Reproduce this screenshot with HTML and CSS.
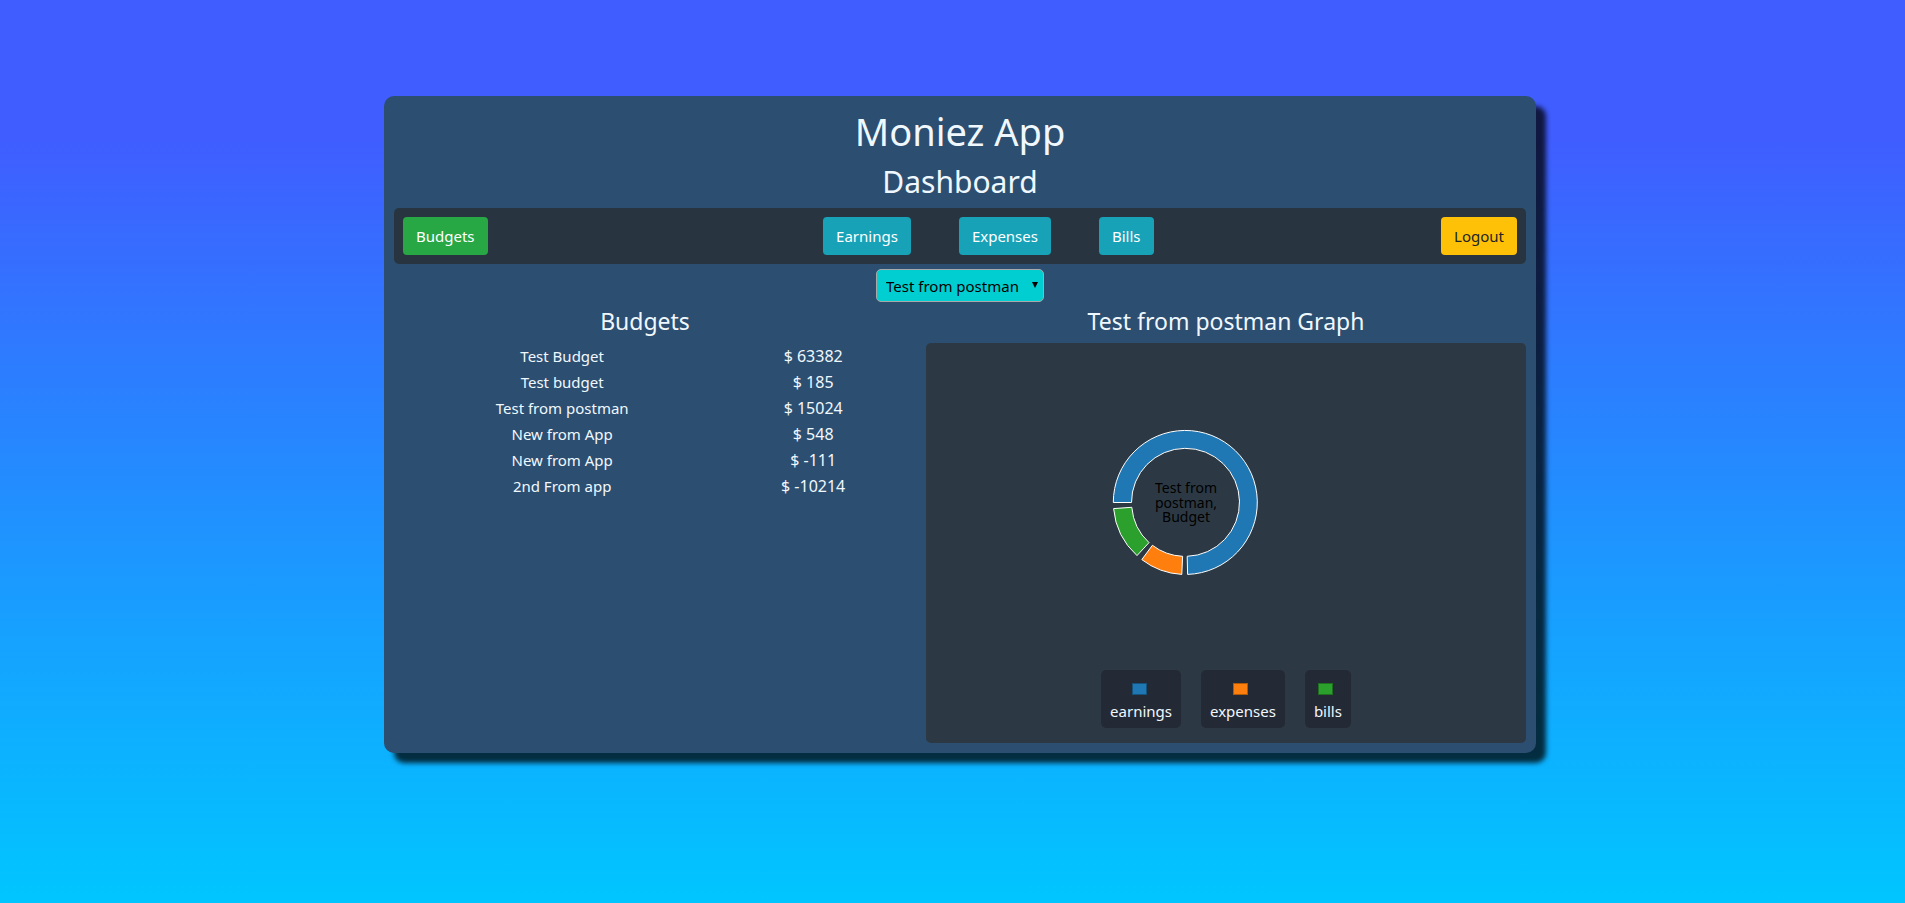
FILE: index.html
```html
<!DOCTYPE html>
<html lang="en">
<head>
<meta charset="utf-8">
<title>Moniez App</title>
<link rel="stylesheet" href="styles.css">
</head>
<body>
<main class="card">
  <h1>Moniez App</h1>
  <h2>Dashboard</h2>
  <nav class="bar">
    <a class="btn green" href="#budgets">Budgets</a>
    <div class="links">
      <a class="btn teal" href="#earnings">Earnings</a>
      <a class="btn teal" href="#expenses">Expenses</a>
      <a class="btn teal" href="#bills">Bills</a>
    </div>
    <button class="btn yellow" type="button">Logout</button>
  </nav>
  <div class="picker">
    <select aria-label="Budget">
      <option>Test from postman</option>
      <option>Test Budget</option>
      <option>New from App</option>
    </select>
    <svg class="arrow" viewBox="0 0 6 6" aria-hidden="true"><path d="M0 0H6L3 6Z"/></svg>
  </div>
  <div class="columns">
    <section id="budgets">
      <h3>Budgets</h3>
      <table>
        <tr><td class="name">Test Budget</td><td>$ 63382</td></tr>
        <tr><td class="name">Test budget</td><td>$ 185</td></tr>
        <tr><td class="name">Test from postman</td><td>$ 15024</td></tr>
        <tr><td class="name">New from App</td><td>$ 548</td></tr>
        <tr><td class="name">New from App</td><td>$ -111</td></tr>
        <tr><td class="name">2nd From app</td><td>$ -10214</td></tr>
      </table>
    </section>
    <section>
      <h3>Test from postman Graph</h3>
      <div class="graph">
        <svg class="donut" viewBox="0 0 600 320" role="img" aria-label="Test from postman, Budget">
          <g transform="translate(154 57)" stroke="#fff">
            <path fill="#1f77b4" d="M33.3 102.5A72 72 0 1 1 107.6 174.4L107.2 156.3A54 54 0 1 0 51.5 102.5Z"/>
            <path fill="#ff7f0e" d="M101.8 174.4A72 72 0 0 1 61.8 159.6L72.4 145.3A54 54 0 0 0 102.6 156.3Z"/>
            <path fill="#2ca02c" d="M57 155.6A72 72 0 0 1 33.6 108.6L51.8 107.3A54 54 0 0 0 69 142.6Z"/>
          </g>
          <g class="label">
            <text x="260" y="150">Test from</text>
            <text x="260" y="165">postman,</text>
            <text x="260" y="179">Budget</text>
          </g>
        </svg>
        <ul class="legend">
          <li><span class="swatch blue"></span>earnings</li>
          <li><span class="swatch orange"></span>expenses</li>
          <li><span class="swatch lime"></span>bills</li>
        </ul>
      </div>
    </section>
  </div>
</main>
</body>
</html>
```
FILE: styles.css
```css
* { box-sizing: border-box; }
body {
  margin: 0;
  min-height: 100vh;
  padding: 96px 0 96px 15px;
  background: linear-gradient(#405dff 15%, #00c6ff 100%);
  color: #f0f8ff;
  font: 15px/24px "Noto Sans", sans-serif;
}
.card {
  max-width: 1152px;
  margin: 0 auto;
  padding: 10px;
  border-radius: 10px;
  background: #2c4e70;
  box-shadow: 10px 10px 5px rgba(0, 0, 0, .75);
}
h1, h2, h3 { margin: 0; font-weight: 400; text-align: center; }
h1 { font-size: 38px; line-height: 50px; margin-bottom: 7px; }
h2 { font-size: 30px; line-height: 38px; margin-bottom: 7px; }
h3 { font-size: 23px; line-height: 28px; margin-bottom: 8px; }
.bar {
  display: flex;
  align-items: center;
  justify-content: space-between;
  padding: 9px;
  border-radius: 5px;
  background: #283541;
}
.links { display: flex; gap: 48px; padding-left: 48px; }
.btn {
  padding: 6px 12px;
  border: 1px solid transparent;
  border-radius: 4px;
  font: inherit;
  line-height: 24px;
  color: #fff;
  text-decoration: none;
}
.green { background: #28a745; }
.teal { background: #17a2b8; }
.yellow { background: #ffc107; color: #212529; }
.picker {
  position: relative;
  width: fit-content;
  margin: 5px auto;
}
select {
  display: block;
  height: 33px;
  padding: 0 24px 0 9px;
  border: 1px solid #a9a9a9;
  border-radius: 5px;
  background: #00ced1;
  color: #000;
  font: inherit;
  appearance: none;
}
.arrow {
  position: absolute;
  top: 13px;
  right: 6px;
  width: 6px;
  height: 6px;
}
.columns { display: grid; grid-template-columns: minmax(0, 502fr) minmax(0, 600fr); gap: 30px; }
table { width: 100%; table-layout: fixed; border-collapse: collapse; text-align: center; }
td { padding: 1px; font-size: 16px; }
.name { width: 67%; font-size: 15px; }
.graph { padding-bottom: 15px; border-radius: 5px; background: #2c3944; }
.donut { display: block; width: 100%; }
.label { font-size: 14px; text-anchor: middle; fill: #000; }
.legend {
  display: flex;
  justify-content: center;
  gap: 20px;
  margin: 0;
  padding: 7px 0 0;
  list-style: none;
}
.legend li {
  display: flex;
  flex-direction: column;
  align-items: center;
  gap: 4px;
  padding: 13px 9px 5px;
  border-radius: 5px;
  background: #242a35;
}
.swatch { width: 15px; height: 12px; margin-right: 4px; border: 1px solid rgba(0, 0, 0, .3); }
.blue { background: #1f77b4; }
.orange { background: #ff7f0e; }
.lime { background: #2ca02c; }
```
